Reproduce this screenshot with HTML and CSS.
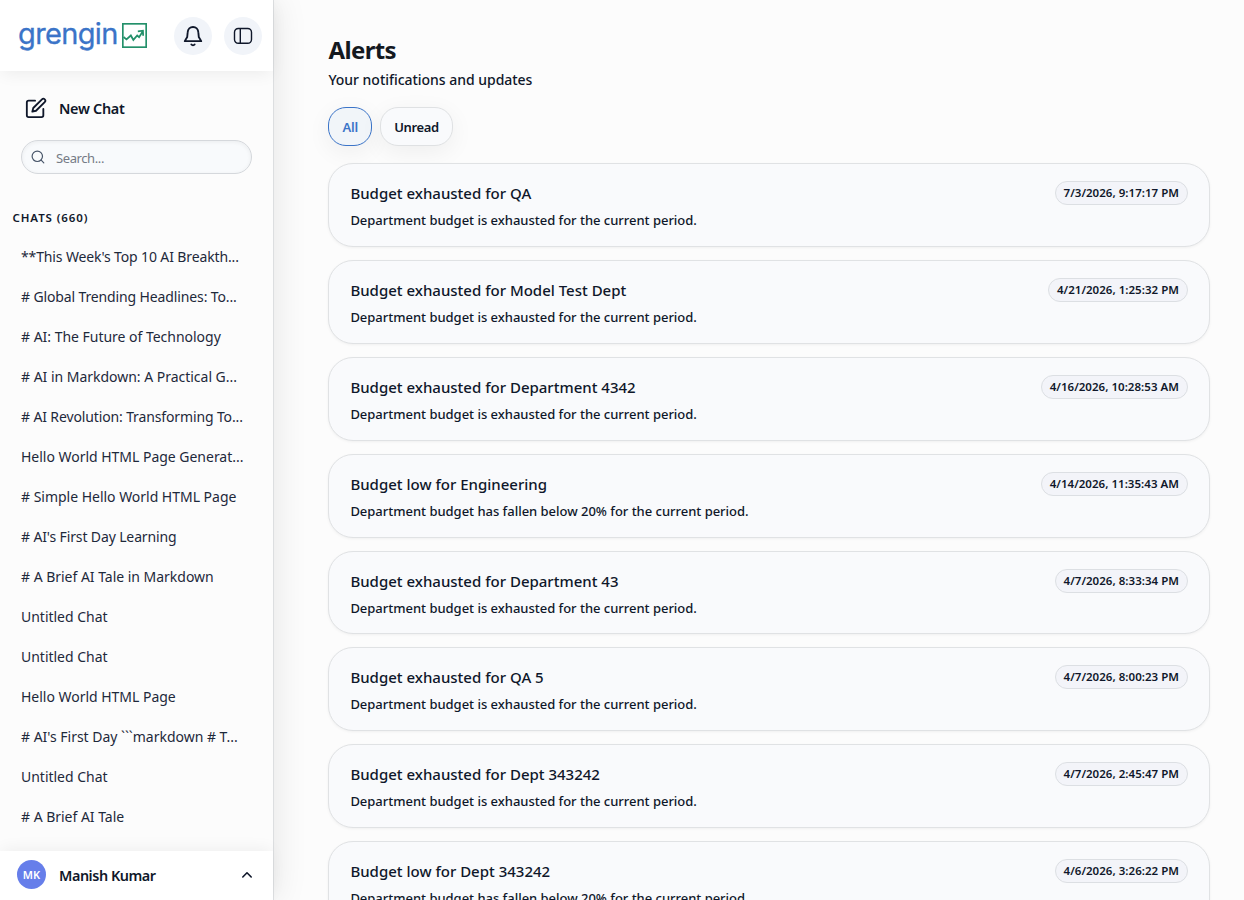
FILE: index.html
```html
<!DOCTYPE html>
<html lang="en">
<head>
    <meta charset="UTF-8">
    <title>Alerts</title>
    <link rel="stylesheet" href="styles.css">
</head>
<body>

<aside class="sidebar">
    <header class="sidebar-top">
        <a class="logo" href="#">
            <span class="logo-text">grengin</span>
            <svg class="logo-mark" viewBox="0 0 24 24" fill="none" stroke="#23906a">
                <rect x=".8" y=".8" width="22.4" height="22.4" stroke-width="1.6"/>
                <path d="M1.500 13.500l2.800 2.200 4.200-3.700 2.400 4.200L14.600 12l1.800 1.600 3.600-5.600M15.200 8l4.900-.6.2 4.800" stroke-width="1.700"/>
            </svg>
        </a>
        <button class="round-btn bell">
            <svg width="22" height="22" viewBox="0 0 24 24" fill="none" stroke="currentColor" stroke-width="2" stroke-linecap="round" stroke-linejoin="round">
                <path d="M12 2.200C8.800 2.200 6.400 4.600 6.200 7.800L5.700 13 3 17.600h18L18.300 13l-.5-5.200C17.600 4.600 15.200 2.200 12 2.200z"/>
                <path d="M10.200 21.300a2.300 2.300 0 0 0 3.600 0"/>
            </svg>
        </button>
        <button class="round-btn">
            <svg width="20" height="18" viewBox="0 0 20 18" fill="none" stroke="currentColor" stroke-width="1.400">
                <rect x="1.500" y="1.500" width="17" height="14.800" rx="3.800"/>
                <path d="M7.300 1.500v14.800"/>
            </svg>
        </button>
    </header>

    <div class="sidebar-body">
        <a class="new-chat" href="#">
            <svg width="22" height="22" viewBox="0 0 24 24" fill="none" stroke="currentColor" stroke-width="2" stroke-linecap="round" stroke-linejoin="round">
                <path d="M11 4H4a2 2 0 0 0-2 2v14a2 2 0 0 0 2 2h14a2 2 0 0 0 2-2v-7"/>
                <path d="M18.500 2.500a2.121 2.121 0 0 1 3 3L12 15l-4 1 1-4 9.500-9.500z"/>
            </svg>
            <span>New Chat</span>
        </a>
        <label class="search">
            <svg width="14" height="14" viewBox="0 0 14 14" fill="none" stroke="currentColor" stroke-width="1.200" stroke-linecap="round">
                <circle cx="6.300" cy="6.300" r="5.200"/>
                <path d="M10.200 10.200l2.600 2.600"/>
            </svg>
            <input type="text" placeholder="Search...">
        </label>
        <h2 class="chats-title">CHATS (660)</h2>
        <ul class="chats">
            <li class="tight">**This Week's Top 10 AI Breakth...</li>
            <li class="tight"># Global Trending Headlines: To...</li>
            <li># AI: The Future of Technology</li>
            <li># AI in Markdown: A Practical G...</li>
            <li class="tight"># AI Revolution: Transforming To...</li>
            <li>Hello World HTML Page Generat...</li>
            <li># Simple Hello World HTML Page</li>
            <li class="tight"># AI's First Day Learning</li>
            <li># A Brief AI Tale in Markdown</li>
            <li>Untitled Chat</li>
            <li>Untitled Chat</li>
            <li>Hello World HTML Page</li>
            <li># AI's First Day ```markdown # T...</li>
            <li>Untitled Chat</li>
            <li># A Brief AI Tale</li>
        </ul>
    </div>

    <footer class="user">
        <span class="avatar">MK</span>
        <span class="user-name">Manish Kumar</span>
        <svg width="12" height="8" viewBox="0 0 12 8" fill="none" stroke="currentColor" stroke-width="1.600" stroke-linecap="round" stroke-linejoin="round">
            <path d="M1.800 6L6 1.800 10.200 6"/>
        </svg>
    </footer>
</aside>

<main class="content">
    <h1>Alerts</h1>
    <p class="subtitle">Your notifications and updates</p>
    <div class="filters">
        <button class="filter filter-active">All</button>
        <button class="filter">Unread</button>
    </div>
    <section class="alerts">
        <article class="alert">
            <div><h3>Budget exhausted for QA</h3><p>Department budget is exhausted for the current period.</p></div>
            <time>7/3/2026, 9:17:17 PM</time>
        </article>
        <article class="alert">
            <div><h3>Budget exhausted for Model Test Dept</h3><p>Department budget is exhausted for the current period.</p></div>
            <time>4/21/2026, 1:25:32 PM</time>
        </article>
        <article class="alert">
            <div><h3>Budget exhausted for Department 4342</h3><p>Department budget is exhausted for the current period.</p></div>
            <time>4/16/2026, 10:28:53 AM</time>
        </article>
        <article class="alert">
            <div><h3>Budget low for Engineering</h3><p>Department budget has fallen below 20% for the current period.</p></div>
            <time>4/14/2026, 11:35:43 AM</time>
        </article>
        <article class="alert">
            <div><h3>Budget exhausted for Department 43</h3><p>Department budget is exhausted for the current period.</p></div>
            <time>4/7/2026, 8:33:34 PM</time>
        </article>
        <article class="alert">
            <div><h3>Budget exhausted for QA 5</h3><p>Department budget is exhausted for the current period.</p></div>
            <time>4/7/2026, 8:00:23 PM</time>
        </article>
        <article class="alert">
            <div><h3>Budget exhausted for Dept 343242</h3><p>Department budget is exhausted for the current period.</p></div>
            <time>4/7/2026, 2:45:47 PM</time>
        </article>
        <article class="alert">
            <div><h3>Budget low for Dept 343242</h3><p>Department budget has fallen below 20% for the current period.</p></div>
            <time>4/6/2026, 3:26:22 PM</time>
        </article>
    </section>
</main>

</body>
</html>
```
FILE: styles.css
```css
* {
    box-sizing: border-box;
}

body {
    margin: 0;
    height: 100vh;
    display: flex;
    overflow: hidden;
    background: #fcfcfc;
    color: #0f172a;
    font-family: "Segoe UI", "Noto Sans", sans-serif;
}

h1, h2, h3, p, ul {
    margin: 0;
    padding: 0;
}

button {
    font-family: inherit;
    color: inherit;
    padding: 0;
}

a {
    color: inherit;
    text-decoration: none;
}

/* sidebar */

.sidebar {
    flex: none;
    width: 274px;
    height: 100vh;
    display: flex;
    flex-direction: column;
    background: #fcfcfc;
    border-right: 1px solid #dcdee0;
    box-shadow: 2px 0 32px rgba(0, 0, 0, .09);
}

.sidebar-top {
    flex: none;
    height: 71px;
    display: flex;
    align-items: center;
    padding: 0 11px 0 18px;
    background: #fff;
    box-shadow: 0 4px 16px -2px rgba(0, 0, 0, .07);
}

.logo {
    flex: 1;
    display: flex;
    align-items: center;
    gap: 5px;
}

.logo-text {
    width: 99px;
    margin-top: -3px;
    color: #3b74c8;
    font-family: Inter, sans-serif;
    font-size: 29px;
    line-height: 36px;
    letter-spacing: -.65px;
    white-space: nowrap;
    -webkit-text-stroke: .3px #3b74c8;
}

.logo-mark {
    width: 25px;
    height: 25px;
}

.round-btn {
    width: 38px;
    height: 38px;
    display: flex;
    align-items: center;
    justify-content: center;
    border: 0;
    border-radius: 50%;
    background: #f1f4f9;
}

.bell {
    margin-right: 12px;
}

.sidebar-body {
    flex: 1;
    min-height: 0;
    overflow: hidden;
}

.new-chat {
    height: 40px;
    margin-top: 17px;
    padding-left: 25px;
    display: flex;
    align-items: center;
    gap: 12px;
    font-size: 14.4px;
    font-weight: 600;
    letter-spacing: -.3px;
}

.search {
    height: 34px;
    margin: 12px 21px 0;
    padding: 0 9px;
    display: flex;
    align-items: center;
    gap: 11px;
    color: #475569;
    background: #f8fafc;
    border: 1px solid #d5d8dc;
    border-radius: 17px;
    box-shadow: inset 0 1px 4px rgba(0, 0, 0, .06);
}

.search input {
    flex: 1;
    min-width: 0;
    padding: 2px 0 0;
    border: 0;
    outline: 0;
    background: none;
    font-family: inherit;
    font-size: 13px;
    letter-spacing: -.4px;
}

.search input::placeholder {
    color: #757b86;
}

.chats-title {
    margin: 35px 0 0 12.5px;
    font-size: 11.5px;
    line-height: 18px;
    font-weight: 600;
    letter-spacing: .9px;
}

.chats {
    margin-top: 10px;
    list-style: none;
}

.chats li {
    padding-left: 21px;
    font-size: 14px;
    line-height: 40px;
    letter-spacing: -.02px;
    white-space: nowrap;
    color: #1e293b;
}

.chats .tight {
    letter-spacing: -.13px;
}

.user {
    position: relative;
    flex: none;
    height: 49px;
    padding: 0 20px 2px 17px;
    display: flex;
    align-items: center;
    background: #fff;
    box-shadow: 0 -4px 16px -2px rgba(0, 0, 0, .06);
}

.avatar {
    width: 29px;
    height: 29px;
    margin-right: 13px;
    border-radius: 50%;
    background: #667eea;
    color: #fff;
    font-size: 11px;
    line-height: 29px;
    font-weight: 600;
    text-align: center;
}

.user-name {
    flex: 1;
    padding-top: 2px;
    font-size: 14.4px;
    font-weight: 600;
    letter-spacing: -.45px;
}

/* alerts */

.content {
    flex: 1;
    min-width: 0;
    padding: 33px 34px 0 54.4px;
}

h1 {
    color: #14191f;
    font-size: 24px;
    line-height: 34px;
    font-weight: 700;
    letter-spacing: -.6px;
}

.subtitle {
    font-size: 14px;
    line-height: 24px;
    font-weight: 500;
    letter-spacing: -.03px;
    margin-top: 1px;
}

.filters {
    display: flex;
    gap: 8px;
    margin-top: 15px;
}

.filter {
    height: 39px;
    padding: 1px 13px 0;
    border: 1px solid #dfe1e3;
    border-radius: 18px;
    background: #f9fafc;
    box-shadow: 0 6px 24px rgba(0, 0, 0, .06);
    font-size: 13px;
    font-weight: 600;
    letter-spacing: -.35px;
}

.filter-active {
    color: #3b74c8;
    background: #f1f5f9;
    border-color: #3b74c8;
    letter-spacing: -.1px;
}

.alerts {
    display: flex;
    flex-direction: column;
    gap: 13px;
    margin-top: 17.2px;
}

.alert {
    height: 83.85px;
    padding: 16px 21px;
    display: flex;
    justify-content: space-between;
    align-items: flex-start;
    background: #f9fafc;
    border: 1px solid #e0e2e4;
    border-radius: 25px;
    box-shadow: 0 1px 3px rgba(0, 0, 0, .05);
}

.alert h3 {
    font-size: 15px;
    line-height: 26px;
    font-weight: 500;
}

.alert p {
    margin-top: 1px;
    font-size: 13px;
    line-height: 26px;
    font-weight: 500;
    letter-spacing: -.02px;
}

.alert time {
    margin-top: 1px;
    padding: 0 8px;
    border: 1px solid #dcdfe3;
    border-radius: 12px;
    background: #f3f4f9;
    font-size: 11.5px;
    line-height: 22px;
    font-weight: 600;
    letter-spacing: .03px;
}
```
